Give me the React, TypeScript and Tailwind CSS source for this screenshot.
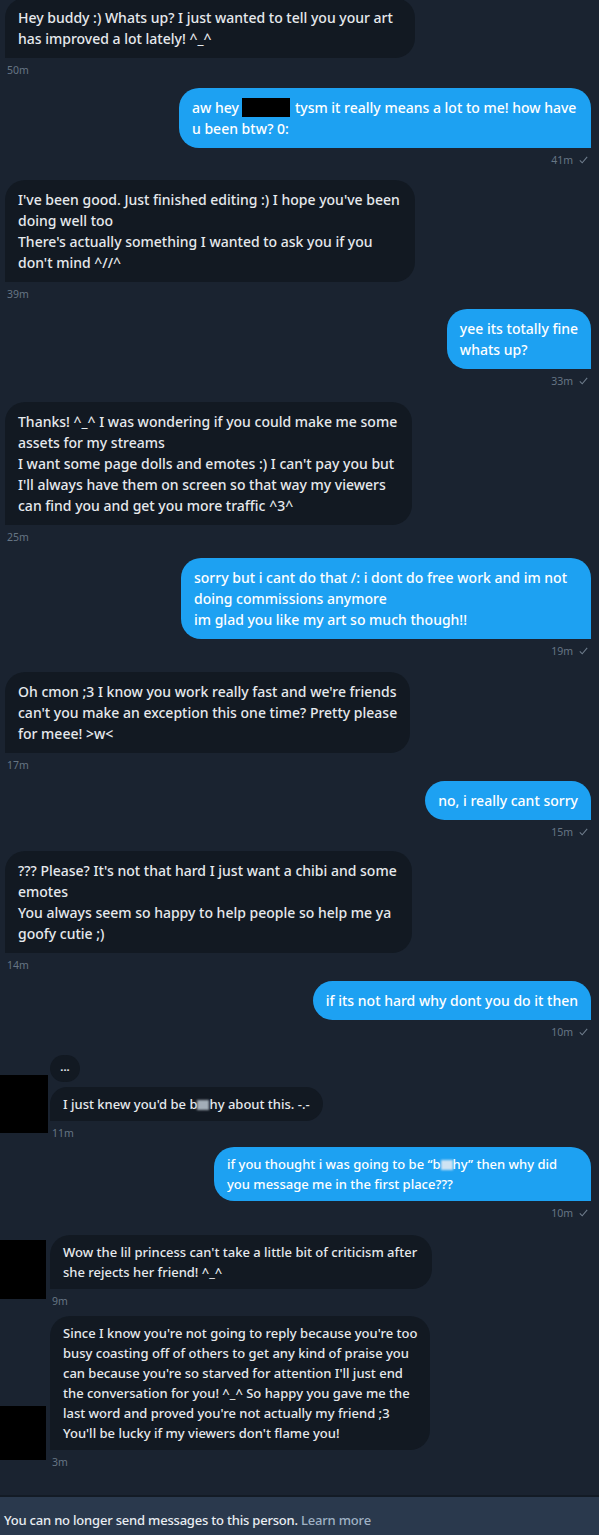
import React from "react";

type Side = "in" | "out";

function Check() {
  return (
    <svg width="9" height="8" viewBox="0 0 9 8" className="block">
      <path d="M0.8 4.4 L3.2 6.8 L8.2 0.8" fill="none" stroke="#6e7c8b" strokeWidth="1.1" />
    </svg>
  );
}

function Bubble({
  side,
  lines,
  w = "",
  small = false,
}: {
  side: Side;
  lines: React.ReactNode[];
  w?: string;
  small?: boolean;
}) {
  const base = small
    ? "py-[7px] text-[13px] leading-[20px]"
    : "py-[9px] text-[14px] leading-[21px]";
  const tone =
    side === "in"
      ? "bg-[#121922] text-[#e6e9ed] rounded-[20px] rounded-bl-none"
      : "bg-[#1da1f2] text-white rounded-[20px] rounded-br-none";
  return (
    <div className={`px-[13px] font-medium ${base} ${tone} ${w}`}>
      {lines.map((l, i) => (
        <div key={i} className="whitespace-nowrap">
          {l}
        </div>
      ))}
    </div>
  );
}

function Stamp({ side, time }: { side: Side; time: string }) {
  return (
    <div
      className={`mt-[5px] h-[14px] leading-[14px] text-[10.5px] text-[#667584] flex items-center gap-[6px] ${
        side === "out" ? "self-end pr-[3px]" : "self-start pl-[2px]"
      }`}
    >
      <span>{time}</span>
      {side === "out" && <Check />}
    </div>
  );
}

function Group({
  side,
  lines,
  time,
  w,
  mt,
  small,
}: {
  side: Side;
  lines: React.ReactNode[];
  time: string;
  w?: string;
  mt: string;
  small?: boolean;
}) {
  return (
    <div className={`flex flex-col ${side === "out" ? "items-end" : "items-start"} ${mt}`}>
      <Bubble side={side} lines={lines} w={w} small={small} />
      <Stamp side={side} time={time} />
    </div>
  );
}

function Censor({ light }: { light?: boolean }) {
  return (
    <span
      className={`inline-block w-[12px] h-[10px] align-[-1px] blur-[1px] ${
        light ? "bg-[#cfe3f3]" : "bg-[#a3adb8]"
      }`}
    />
  );
}

function AvatarRow({
  children,
  mt,
  box,
}: {
  children: React.ReactNode;
  mt: string;
  box: string;
}) {
  return (
    <div className={`flex -ml-[5px] ${mt}`}>
      <div className="w-[50px] shrink-0 flex flex-col justify-end">
        <div className={`bg-black ${box}`} />
      </div>
      <div className="flex flex-col items-start">{children}</div>
    </div>
  );
}

export default function App() {
  return (
    <div className="w-[599px] h-[1535px] overflow-hidden bg-[#1a2330] flex flex-col font-['Noto_Sans','Open_Sans',sans-serif]">
      <div className="flex flex-col pl-[5px] pr-[8px] -mt-[2px]">
        <Group
          side="in"
          mt="mt-0"
          w="w-[410px]"
          time="50m"
          lines={[
            "Hey buddy :) Whats up? I just wanted to tell you your art",
            "has improved a lot lately! ^_^",
          ]}
        />
        <Group
          side="out"
          mt="mt-[11px]"
          w="w-[412px]"
          time="41m"
          lines={[
            <>
              aw hey
              <span className="inline-block w-[48px] h-[19px] bg-black align-middle ml-[3px] mr-[5px] -mt-[3px]" />
              tysm it really means a lot to me! how have
            </>,
            "u been btw? 0:",
          ]}
        />
        <Group
          side="in"
          mt="mt-[13px]"
          w="w-[410px]"
          time="39m"
          lines={[
            "I've been good. Just finished editing :) I hope you've been",
            "doing well too",
            "There's actually something I wanted to ask you if you",
            "don't mind ^//^",
          ]}
        />
        <Group
          side="out"
          mt="mt-[8px]"
          time="33m"
          lines={["yee its totally fine", "whats up?"]}
        />
        <Group
          side="in"
          mt="mt-[14px]"
          w="w-[407px]"
          time="25m"
          lines={[
            "Thanks! ^_^ I was wondering if you could make me some",
            "assets for my streams",
            "I want some page dolls and emotes :) I can't pay you but",
            "I'll always have them on screen so that way my viewers",
            "can find you and get you more traffic ^3^",
          ]}
        />
        <Group
          side="out"
          mt="mt-[14px]"
          w="w-[410px]"
          time="19m"
          lines={[
            "sorry but i cant do that /: i dont do free work and im not",
            "doing commissions anymore",
            "im glad you like my art so much though!!",
          ]}
        />
        <Group
          side="in"
          mt="mt-[14px]"
          w="w-[405px]"
          time="17m"
          lines={[
            "Oh cmon ;3 I know you work really fast and we're friends",
            "can't you make an exception this one time? Pretty please",
            "for meee! >w<",
          ]}
        />
        <Group side="out" mt="mt-[9px]" time="15m" lines={["no, i really cant sorry"]} />
        <Group
          side="in"
          mt="mt-[12px]"
          w="w-[407px]"
          time="14m"
          lines={[
            "??? Please? It's not that hard I just want a chibi and some",
            "emotes",
            "You always seem so happy to help people so help me ya",
            "goofy cutie ;)",
          ]}
        />
        <Group
          side="out"
          mt="mt-[9px]"
          time="10m"
          lines={["if its not hard why dont you do it then"]}
        />

        <AvatarRow mt="mt-[16px]" box="w-[48px] h-[58px] mb-[7px]">
          <div className="w-[30px] h-[27px] rounded-full bg-[#121922] flex items-center justify-center text-[#e6e9ed] text-[11px] font-bold leading-none pb-[4px]">
            ...
          </div>
          <div className="mt-[5px]">
            <Bubble
              side="in"
              small
              lines={[
                <>
                  I just knew you'd be b<Censor />hy about this. -.-
                </>,
              ]}
            />
          </div>
          <Stamp side="in" time="11m" />
        </AvatarRow>

        <Group
          side="out"
          small
          mt="mt-[7px]"
          w="w-[377px]"
          time="10m"
          lines={[
            <>
              if you thought i was going to be “b<Censor light />hy” then why did
            </>,
            "you message me in the first place???",
          ]}
        />

        <AvatarRow mt="mt-[15px]" box="w-[46px] h-[59px] mb-[9px]">
          <Bubble
            side="in"
            small
            w="w-[382px]"
            lines={[
              "Wow the lil princess can't take a little bit of criticism after",
              "she rejects her friend! ^_^",
            ]}
          />
          <Stamp side="in" time="9m" />
        </AvatarRow>

        <AvatarRow mt="mt-[8px]" box="w-[46px] h-[54px] mb-[9px]">
          <Bubble
            side="in"
            small
            w="w-[380px]"
            lines={[
              "Since I know you're not going to reply because you're too",
              "busy coasting off of others to get any kind of praise you",
              "can because you're so starved for attention I'll just end",
              "the conversation for you! ^_^ So happy you gave me the",
              "last word and proved you're not actually my friend ;3",
              "You'll be lucky if my viewers don't flame you!",
            ]}
          />
          <Stamp side="in" time="3m" />
        </AvatarRow>
      </div>

      <div className="mt-auto h-[40px] shrink-0 border-t-[2px] border-[#131b25] bg-[#2a394d] pl-[4px] pt-[13px] text-[13px] leading-[20px] font-medium tracking-[-0.2px] whitespace-nowrap">
        <span className="text-[#e8edf2]">You can no longer send messages to this person. </span>
        <span className="text-[#9fb1c4]">Learn more</span>
      </div>
    </div>
  );
}
